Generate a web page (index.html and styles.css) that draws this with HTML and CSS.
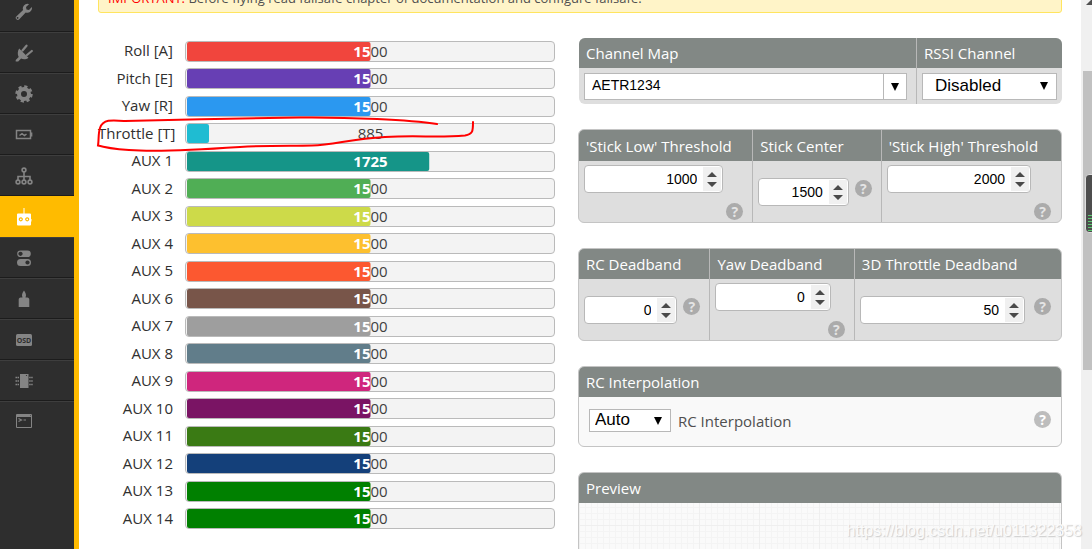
FILE: index.html
```html
<!DOCTYPE html>
<html lang="en">
<head>
<meta charset="utf-8">
<title>Receiver</title>
<link rel="stylesheet" href="styles.css">
</head>
<body>
<svg class="defs" aria-hidden="true">
  <symbol id="spin" viewBox="0 0 18 24"><path d="M9 5l5 5H4zM9 20l5-5H4z" fill="#4a4a4a"/></symbol>
  <symbol id="down" viewBox="0 0 8 8"><path d="M0 0h8L4 8z"/></symbol>
</svg>
<nav class="sidebar" aria-label="Tabs">
  <a class="tab" href="#setup" aria-label="Setup"><svg viewBox="0 0 18 18"><path fill="currentColor" d="M17 5.200a4.600 4.600 0 0 1-6.300 4.200L4.300 16.200a2 2 0 0 1-3-2.800l6.800-6.300A4.600 4.600 0 0 1 13.500 1l.5.2-3 2.800.5 2.400 2.500.6L16.800 4zM2.900 14a.9.9 0 1 0 .2 1.600.9.9 0 0 0-.2-1.600z"/></svg></a>
  <a class="tab" href="#ports" aria-label="Ports"><svg viewBox="0 0 18 18"><path fill="currentColor" d="M4.200 4.500l9.300 9.300c-2.300 1.800-5.200 2-7.400.8L3.200 17.500H.7v-1.400l3-3.100C2.300 10.500 2.500 7 4.200 4.500z"/><path d="M7.500 6.500l4-4.800M12 11l4.800-4" stroke="currentColor" stroke-width="2.200" stroke-linecap="round"/></svg></a>
  <a class="tab" href="#configuration" aria-label="Configuration"><svg viewBox="0 0 18 18"><circle cx="9" cy="9" r="5" fill="none" stroke="currentColor" stroke-width="4"/><circle cx="9" cy="9" r="7.400" fill="none" stroke="currentColor" stroke-width="2.600" stroke-dasharray="3.200 2.610"/></svg></a>
  <a class="tab" href="#power" aria-label="Power"><svg viewBox="0 0 18 18"><path fill="none" stroke="currentColor" stroke-width="1.500" d="M1.500 4.500h14v8h-14zM4.500 9.500L7 7.700l2.500 1.800 2-1.500M16.600 6.500v4"/></svg></a>
  <a class="tab" href="#failsafe" aria-label="Failsafe"><svg viewBox="0 0 18 18"><g fill="none" stroke="currentColor" stroke-width="1.600"><circle cx="9" cy="3" r="1.900"/><circle cx="3" cy="15" r="1.900"/><circle cx="9" cy="15" r="1.900"/><circle cx="15" cy="15" r="1.900"/><path d="M9 5v8M3 13V9.500h12V13"/></g></svg></a>
  <a class="tab tab-active" href="#receiver" aria-label="Receiver" aria-current="page"><svg viewBox="0 0 18 18"><path fill="currentColor" fill-rule="evenodd" d="M8.500 0h1v5.500H15a1 1 0 0 1 1 1v4.500h.5v2.500H16V16.500a1 1 0 0 1-1 1H3a1 1 0 0 1-1-1V6.500a1 1 0 0 1 1-1h5.500zM5.800 9.200a2.100 2.100 0 1 0 .01 0zm6.400 0a2.100 2.100 0 1 0 .01 0z"/><circle cx="5.800" cy="11.300" r=".9" fill="currentColor"/><circle cx="12.200" cy="11.300" r=".9" fill="currentColor"/></svg></a>
  <a class="tab" href="#modes" aria-label="Modes"><svg viewBox="0 0 18 18"><path fill="currentColor" fill-rule="evenodd" d="M5.500 1.500h7a3.300 3.300 0 0 1 0 6.600h-7a3.300 3.300 0 0 1 0-6.600zM5.500 2.700a2.100 2.100 0 1 0 .01 0zM5.500 10h7a3.500 3.500 0 0 1 0 7h-7a3.500 3.500 0 0 1 0-7zM12.500 11.400a2.100 2.100 0 1 0 .01 0z"/></svg></a>
  <a class="tab" href="#motors" aria-label="Motors"><svg viewBox="0 0 18 18"><path fill="currentColor" d="M9 .5c1.200 1.500 2 3.500 2 5L10.500 7.500H12.500c1 0 1.800 1 1.800 2v7.500H3.700V9.500c0-1 .8-2 1.800-2h2L7 5.500c0-1.500.8-3.500 2-5z"/></svg></a>
  <a class="tab" href="#osd" aria-label="OSD"><svg viewBox="0 0 18 18"><rect x="1" y="3" width="16" height="12" rx="1.500" fill="currentColor"/><text class="osd" x="9" y="12">OSD</text></svg></a>
  <a class="tab" href="#blackbox" aria-label="Blackbox"><svg viewBox="0 0 18 18"><path fill="currentColor" d="M5 2h8.500v14H5z"/><path d="M.5 5.500H4M.5 9H4M.5 12.500H4M14.200 5.500h3.500M14.200 9h3.500M14.200 12.500h3.500" stroke="currentColor" stroke-width="1.600" stroke-dasharray="1.500 .5"/><circle cx="11.500" cy="3.500" r=".6" fill="#2e2e2e"/></svg></a>
  <a class="tab" href="#cli" aria-label="CLI"><svg viewBox="0 0 18 18"><path fill="none" stroke="currentColor" d="M1.500 1.500h15v13h-15zM1.500 3.500h15"/><path fill="none" stroke="currentColor" stroke-width="1.200" d="M3.500 5.500l3 1.500-3 1.500M8.500 7h2.500M2 2.500h13.500"/></svg></a>
</nav>

<main class="content">
  <p class="note"><span class="note-key">IMPORTANT:</span> Before flying read failsafe chapter of documentation and configure failsafe.</p>
  <div class="columns">
    <section class="bars" aria-label="Channels">
      <div class="row"><span class="name">Roll [A]</span><div class="meter"><span class="val">1500</span><span class="fill c-roll" style="--fill:50%" aria-hidden="true">1500</span></div></div>
      <div class="row"><span class="name">Pitch [E]</span><div class="meter"><span class="val">1500</span><span class="fill c-pitch" style="--fill:50%" aria-hidden="true">1500</span></div></div>
      <div class="row"><span class="name">Yaw [R]</span><div class="meter"><span class="val">1500</span><span class="fill c-yaw" style="--fill:50%" aria-hidden="true">1500</span></div></div>
      <div class="row"><span class="name">Throttle [T]</span><div class="meter"><span class="val">885</span><span class="fill c-throttle" style="--fill:6%" aria-hidden="true"></span></div></div>
      <div class="row"><span class="name">AUX 1</span><div class="meter"><span class="val">1725</span><span class="fill c-aux1" style="--fill:66%" aria-hidden="true">1725</span></div></div>
      <div class="row"><span class="name">AUX 2</span><div class="meter"><span class="val">1500</span><span class="fill c-aux2" style="--fill:50%" aria-hidden="true">1500</span></div></div>
      <div class="row"><span class="name">AUX 3</span><div class="meter"><span class="val">1500</span><span class="fill c-aux3" style="--fill:50%" aria-hidden="true">1500</span></div></div>
      <div class="row"><span class="name">AUX 4</span><div class="meter"><span class="val">1500</span><span class="fill c-aux4" style="--fill:50%" aria-hidden="true">1500</span></div></div>
      <div class="row"><span class="name">AUX 5</span><div class="meter"><span class="val">1500</span><span class="fill c-aux5" style="--fill:50%" aria-hidden="true">1500</span></div></div>
      <div class="row"><span class="name">AUX 6</span><div class="meter"><span class="val">1500</span><span class="fill c-aux6" style="--fill:50%" aria-hidden="true">1500</span></div></div>
      <div class="row"><span class="name">AUX 7</span><div class="meter"><span class="val">1500</span><span class="fill c-aux7" style="--fill:50%" aria-hidden="true">1500</span></div></div>
      <div class="row"><span class="name">AUX 8</span><div class="meter"><span class="val">1500</span><span class="fill c-aux8" style="--fill:50%" aria-hidden="true">1500</span></div></div>
      <div class="row"><span class="name">AUX 9</span><div class="meter"><span class="val">1500</span><span class="fill c-aux9" style="--fill:50%" aria-hidden="true">1500</span></div></div>
      <div class="row"><span class="name">AUX 10</span><div class="meter"><span class="val">1500</span><span class="fill c-aux10" style="--fill:50%" aria-hidden="true">1500</span></div></div>
      <div class="row"><span class="name">AUX 11</span><div class="meter"><span class="val">1500</span><span class="fill c-aux11" style="--fill:50%" aria-hidden="true">1500</span></div></div>
      <div class="row"><span class="name">AUX 12</span><div class="meter"><span class="val">1500</span><span class="fill c-aux12" style="--fill:50%" aria-hidden="true">1500</span></div></div>
      <div class="row"><span class="name">AUX 13</span><div class="meter"><span class="val">1500</span><span class="fill c-aux13" style="--fill:50%" aria-hidden="true">1500</span></div></div>
      <div class="row"><span class="name">AUX 14</span><div class="meter"><span class="val">1500</span><span class="fill c-aux13" style="--fill:50%" aria-hidden="true">1500</span></div></div>
      <svg class="marker" viewBox="96 114 384 42" aria-hidden="true"><path d="M437 124C410 120 350 117 300 117.500S180 120 125 121C112 120 103 119 100 128C98 134 99 140 98 145.500C110 148 112 149.500 140 150.500S210 149 240 147S290 146 312 145.500S350 139 385 137S435 138 465 135.500C473 134 473 131 473 122"/></svg>
    </section>

    <div class="panels">
      <section class="panel panel-plain">
        <div class="col w-map"><label class="head" for="map">Channel Map</label>
          <div class="cell"><div class="combo"><input id="map" type="text" value="AETR1234"><button type="button" aria-label="Show presets"><svg><use href="#down"/></svg></button></div></div></div>
        <div class="col w-rssi"><label class="head" for="rssi">RSSI Channel</label>
          <div class="cell"><div class="pick pick-rssi"><select id="rssi"><option>Disabled</option></select><svg aria-hidden="true"><use href="#down"/></svg></div></div></div>
      </section>

      <section class="panel panel-sticks">
        <div class="col w-low"><label class="head" for="low">'Stick Low' Threshold</label>
          <div class="cell stacked"><div class="num n-low"><input id="low" type="number" value="1000"><svg aria-hidden="true"><use href="#spin"/></svg></div><button type="button" class="help" aria-label="Help">?</button></div></div>
        <div class="col w-center"><label class="head" for="center">Stick Center</label>
          <div class="cell"><div class="num"><input id="center" type="number" value="1500"><svg aria-hidden="true"><use href="#spin"/></svg></div><button type="button" class="help" aria-label="Help">?</button></div></div>
        <div class="col w-high"><label class="head" for="high">'Stick High' Threshold</label>
          <div class="cell stacked end"><div class="num n-high"><input id="high" type="number" value="2000"><svg aria-hidden="true"><use href="#spin"/></svg></div><button type="button" class="help" aria-label="Help">?</button></div></div>
      </section>

      <section class="panel">
        <div class="col w-rc"><label class="head" for="rc">RC Deadband</label>
          <div class="cell"><div class="num"><input id="rc" type="number" value="0"><svg aria-hidden="true"><use href="#spin"/></svg></div><button type="button" class="help" aria-label="Help">?</button></div></div>
        <div class="col w-yaw"><label class="head" for="yaw">Yaw Deadband</label>
          <div class="cell stacked"><div class="num n-yaw"><input id="yaw" type="number" value="0"><svg aria-hidden="true"><use href="#spin"/></svg></div><button type="button" class="help" aria-label="Help">?</button></div></div>
        <div class="col w-3d"><label class="head" for="d3">3D Throttle Deadband</label>
          <div class="cell end wide"><div class="num"><input id="d3" type="number" value="50"><svg aria-hidden="true"><use href="#spin"/></svg></div><button type="button" class="help" aria-label="Help">?</button></div></div>
      </section>

      <section class="panel panel-light">
        <div class="col"><h2 class="head">RC Interpolation</h2>
          <div class="cell interp"><div class="pick pick-auto"><select id="interp"><option>Auto</option></select><svg aria-hidden="true"><use href="#down"/></svg></div><label for="interp">RC Interpolation</label><button type="button" class="help" aria-label="Help">?</button></div></div>
      </section>

      <section class="panel panel-preview">
        <div class="col"><h2 class="head">Preview</h2><div class="preview"></div></div>
      </section>
    </div>
  </div>
</main>

<div class="scroll" aria-hidden="true">
  <svg class="scroll-up" viewBox="0 0 9 5"><path d="M0 5L5 0h4v5z" fill="#505050"/></svg>
  <div class="thumb"></div>
  <div class="level"></div>
</div>
<div class="watermark">https://blog.csdn.net/u011322358</div>
</body>
</html>
```
FILE: styles.css
```css
* { box-sizing: border-box; }
body { margin: 0; height: 100vh; overflow: hidden; display: flex; position: relative; background: #fff; color: #303030; font: 14px/20px "Open Sans", "Noto Sans", sans-serif; }
button, input, select { margin: 0; padding: 0; border: 0; border-radius: 0; background: none; color: #000; outline: 0; }
.defs { position: absolute; width: 0; height: 0; }

/* Sidebar, scrolled so that its first tab is partly out of view */
.sidebar { flex: none; width: 79px; margin-top: -9px; background: #2e2e2e; border-right: 5px solid #ffbb00; }
.tab { display: flex; height: 41px; padding-left: 15px; align-items: center; color: #848484; border-top: 1px solid #3e3e3e; border-bottom: 1px solid #1c1c1c; }
.tab:last-child { border-bottom-color: transparent; }
.tab svg { width: 18px; height: 18px; }
.tab-active { background: #ffbb00; border-color: #ffbb00; color: #fff; }
.osd { font: bold 7px "Open Sans", sans-serif; text-anchor: middle; fill: #2e2e2e; }

.content { flex: 1; min-width: 0; padding: 0 19px; display: flex; flex-direction: column; }
.note { flex: none; margin: -14px 0 0; height: 27px; padding: 0 9px; font-size: 13px; line-height: 22px; background: #fff4c8; border: 1px solid #ffe55f; border-radius: 3px; color: #4f4f4f; white-space: nowrap; }
.note-key { color: #f00; }
.columns { flex: 1; min-height: 0; display: flex; gap: 23px; padding-top: 25px; }

/* Channel bars */
.bars { position: relative; flex: 457; min-width: 0; display: grid; align-content: start; grid-template-rows: repeat(9, 27px 28px); padding-top: 3px; font-size: 15px; }
.row { display: grid; grid-template-columns: 75px 1fr; gap: 12px; align-items: start; }
.name { text-align: right; white-space: nowrap; }
.row:nth-child(odd) .name { line-height: 18px; }
.meter { display: grid; height: 21px; padding-left: 1px; background: #f3f3f3; border: 1px solid #bababa; border-radius: 4px; }
.val, .fill { grid-area: 1 / 1; text-align: center; line-height: 18px; height: 19px; color: #3f3f3f; }
.fill { color: #fff; font-weight: bold; clip-path: inset(0 calc(100% - var(--fill)) 0 0 round 2px); }
.c-roll { background: #f1453d; }
.c-pitch { background: #673fb4; }
.c-yaw { background: #2b98f0; }
.c-throttle { background: #1fbcd2; }
.c-aux1 { background: #159588; }
.c-aux2 { background: #50ae55; }
.c-aux3 { background: #cdda49; }
.c-aux4 { background: #fdc02f; }
.c-aux5 { background: #fc5830; }
.c-aux6 { background: #785549; }
.c-aux7 { background: #9e9e9e; }
.c-aux8 { background: #617d8a; }
.c-aux9 { background: #cf267d; }
.c-aux10 { background: #7a1464; }
.c-aux11 { background: #3a7a14; }
.c-aux12 { background: #14407a; }
.c-aux13 { background: #008000; }
.marker { position: absolute; left: -2px; top: 76px; width: 384px; height: 42px; fill: none; stroke: #f00; stroke-width: 2; stroke-linecap: round; }

/* Settings panels */
.panels { flex: 484; min-width: 0; display: flex; flex-direction: column; gap: 25px; }
.panel { flex: none; display: flex; min-height: 93px; background: #dedede; border: 1px solid #c4c4c4; border-radius: 6px; overflow: hidden; }
.panel-plain { min-height: 66px; border: 0; margin-left: 1px; }
.panel-sticks { min-height: 94px; }
.panel-light { min-height: 81px; background: #f9f9f9; }
.panel-preview { flex: 1; min-height: 0; border-bottom: 0; border-radius: 6px 6px 0 0; }
.col { flex: 1; min-width: 0; display: flex; flex-direction: column; }
.col + .col { border-left: 1px solid #b8b8b8; }
.head { flex: none; margin: 0; height: 30px; padding: 0 7px; font-size: 15px; font-weight: normal; line-height: 31px; color: #fff; background: #828885; white-space: nowrap; }
.panel-sticks .head { height: 31px; line-height: 33px; }
.cell { flex: 1; display: flex; align-items: center; gap: 6px; padding: 4px 9px 4px 5px; }
.stacked { flex-direction: column; align-items: stretch; justify-content: space-between; gap: 0; padding-bottom: 2px; }
.end { padding-right: 10px; }
.w-map { flex: 337; }
.w-rssi { flex: 145; }
.w-rssi .cell { padding: 4px 5px; }
.w-low { flex: 174; }
.w-center { flex: 128; }
.w-high { flex: 180; }
.w-rc { flex: 131; }
.w-yaw { flex: 144; }
.w-3d { flex: 207; }
.wide { gap: 9px; }
.n-low, .n-high { margin-right: 20px; }
.n-yaw { margin-right: 14px; }

.num { flex: 1; min-width: 0; display: flex; height: 28px; padding: 1px; background: #fff; border: 1px solid #b8b8b8; border-radius: 4px; }
.stacked .num { flex: none; }
.num input { flex: 1; width: 0; padding-right: 6px; text-align: right; font: 14px "Liberation Sans", Arial, sans-serif; appearance: textfield; -moz-appearance: textfield; }
.num input::-webkit-inner-spin-button { appearance: none; -webkit-appearance: none; margin: 0; }
.num svg { width: 18px; height: 24px; background: #f0f0f0; }
.help { flex: none; align-self: center; width: 17px; height: 17px; border-radius: 50%; background: #ababab; color: #e4e4e4; font: bold 14px/17px "Open Sans", sans-serif; text-align: center; margin-bottom: 6px; }
.stacked .help { align-self: flex-end; margin-bottom: 0; }

.combo { flex: 1; display: flex; height: 27px; background: #fff; border: 1px solid #b8b8b8; }
.combo input { flex: 1; width: 0; padding: 0 0 2px 7px; font: 14px "Liberation Sans", Arial, sans-serif; }
.combo button { width: 23px; border-left: 1px solid #b8b8b8; }
.combo svg, .pick svg { width: 8px; height: 8px; }
.pick { display: grid; align-items: center; background: #fff; border: 1px solid #b8b8b8; }
.pick select, .pick svg { grid-area: 1 / 1; }
.pick select { height: 100%; width: 100%; padding-bottom: 2px; appearance: none; font: 17px "Liberation Sans", Arial, sans-serif; }
.pick svg { justify-self: end; margin-right: 8px; pointer-events: none; }
.pick-rssi { flex: 1; height: 27px; }
.pick-rssi select { padding-left: 12px; }
.pick-auto { width: 82px; height: 23px; }
.pick-auto select { padding-left: 5px; }
.interp { padding: 0 10px 2px; gap: 7px; }
.interp label { flex: 1; font-size: 15px; color: #4f4f4f; }
.interp .help { background: #bdbdbd; color: #fff; margin-bottom: 2px; }
.preview { flex: 1; background-color: #fafafa; background-image: linear-gradient(90deg, #efefef 1px, transparent 1px), linear-gradient(#efefef 1px, transparent 1px), linear-gradient(90deg, #f4f4f4 1px, transparent 1px), linear-gradient(#f4f4f4 1px, transparent 1px); background-size: 60px 60px, 60px 60px, 6px 6px, 6px 6px; background-position: 0 22px, 0 22px, 0 4px, 0 4px; }

.scroll { position: relative; flex: none; width: 11px; background: #f0f0f0; overflow: hidden; }
.scroll-up { display: block; width: 9px; height: 5px; margin-left: 5px; }
.thumb { height: 299px; margin: 66px 0 0 2px; background: #c1c1c1; }
.level { position: absolute; left: 4px; top: 174px; width: 12px; height: 59px; border: 1px solid #ddd; border-radius: 4px; background: repeating-linear-gradient(#59c96f 0 1px, #4d4d4d 1px 3px) 2px 40px / 12px 16px no-repeat #4d4d4d; }
.watermark { position: absolute; right: 10px; bottom: 8px; font: 16px/20px "Liberation Sans", Arial, sans-serif; color: #fbfbfb; text-shadow: 1px 1px 1px #ccc; }
```
